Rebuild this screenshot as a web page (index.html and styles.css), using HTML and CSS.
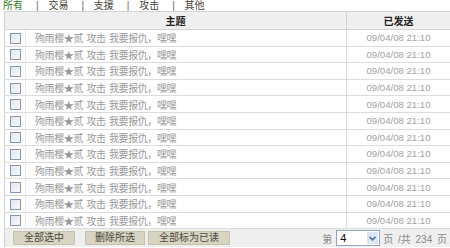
FILE: index.html
```html
<!DOCTYPE html>
<html lang="zh">
<head>
    <meta charset="UTF-8">
    <title>消息</title>
    <link rel="stylesheet" href="styles.css">
</head>
<body>
    <div class="tabs">
        <a class="tab active" href="#">所有</a><span class="sep">|</span>
        <a class="tab" href="#">交易</a><span class="sep">|</span>
        <a class="tab" href="#">支援</a><span class="sep">|</span>
        <a class="tab" href="#">攻击</a><span class="sep">|</span>
        <a class="tab" href="#">其他</a>
    </div>

    <table class="msg-table">
        <thead>
            <tr>
                <th colspan="2">主题</th>
                <th class="col-date">已发送</th>
            </tr>
        </thead>
        <tbody id="msg-body"></tbody>
    </table>

    <div class="footer-bar">
        <div class="actions">
            <button class="btn">全部选中</button>
            <button class="btn btn-delete">删除所选</button>
            <button class="btn btn-read">全部标为已读</button>
        </div>
        <div class="pager">
            <span>第</span>
            <div class="select">
                <span class="select-value">4</span>
                <span class="select-arrow">
                    <svg width="7" height="5" viewBox="0 0 7 5"><path d="M0.5 0.8 L3.5 3.8 L6.5 0.8" fill="none" stroke="#4d6fa8" stroke-width="1.6"/></svg>
                </span>
            </div>
            <span class="pager-total">页 /共 234 页</span>
        </div>
    </div>

    <script>
        // 生成消息列表
        const body = document.getElementById('msg-body');
        for (let i = 0; i < 12; i++) {
            const tr = document.createElement('tr');
            tr.innerHTML = `
                <td class="col-check"><span class="checkbox"></span></td>
                <td class="col-subject">殉雨樱★贰 攻击 我要报仇，嘿嘿</td>
                <td class="col-date">09/04/08 21:10</td>`;
            body.appendChild(tr);
        }
    </script>
</body>
</html>
```

FILE: styles.css
```css
body {
    margin: 0;
    padding: 0 0 0 4px;
    font-family: "Liberation Sans", "Noto Sans CJK SC", sans-serif;
    font-size: 10px;
    color: #333;
    background: #fff;
}
.tabs {
    height: 11px;
    line-height: 11px;
    margin-left: -1px;
    white-space: nowrap;
}
.tab {
    color: #4a4336;
    text-decoration: none;
}
.tab.active {
    color: #2f7a1c;
}
.sep {
    color: #666;
    margin: 0 7px 0 13px;
}
.msg-table {
    width: 446px;
    border-collapse: collapse;
    border-left: 1px solid #d0d0d0;
}
.msg-table th {
    height: 17px;
    background: #efefef;
    border-top: 1px solid #d4d4d4;
    border-bottom: 1px solid #d4d4d4;
    font-weight: bold;
    color: #222;
    padding: 0;
    text-align: center;
}
.msg-table th.col-date {
    border-left: 1px solid #d4d4d4;
}
.msg-table td {
    height: 15.6px;
    padding: 0;
    border-bottom: 1px solid #dcdcdc;
    color: #999;
}
.col-check {
    width: 20px;
    text-align: center;
    border-right: 1px solid #ececec;
}
.col-subject {
    padding-left: 9px !important;
    letter-spacing: -0.4px;
    word-spacing: 1px;
}
td.col-date {
    width: 103px;
    text-align: center;
    border-left: 1px solid #dcdcdc;
    color: #a2a2a2;
    font-size: 9.6px;
}
.checkbox {
    display: inline-block;
    width: 9px;
    height: 9px;
    border: 1px solid #8598b0;
    background: linear-gradient(135deg, #e4e6ea, #f8f8f8);
    vertical-align: middle;
}
.footer-bar {
    width: 445px;
    height: 18px;
    background: #efefef;
    display: flex;
    align-items: center;
    justify-content: space-between;
    border-left: 1px solid #d0d0d0;
}
.actions {
    display: flex;
    padding-left: 8px;
}
.btn {
    font-family: "Liberation Sans", "Noto Sans CJK SC", sans-serif;
    font-size: 10px;
    color: #4a4a40;
    background: #d8d4c2;
    border: 1px solid #c6c2ae;
    height: 14px;
    line-height: 12px;
    padding: 0 10px;
    margin: 0;
}
.btn-delete {
    margin-left: 10px;
    padding: 0 9px;
}
.btn-read {
    margin-left: 3px;
}
.pager {
    display: flex;
    align-items: center;
    gap: 3px;
    color: #8a8a8a;
    padding-right: 3px;
}
.select {
    display: flex;
    align-items: center;
    width: 42px;
    height: 14px;
    border: 1px solid #8fa6c6;
    background: #fff;
    margin: 0 0 0 1px;
}
.select-value {
    flex: 1;
    color: #000;
    padding-left: 3px;
    font-size: 11px;
}
.select-arrow {
    width: 11px;
    height: 12px;
    margin-right: 1px;
    background: #dbe6f6;
    display: flex;
    align-items: center;
    justify-content: center;
}
.pager-total {
    word-spacing: 2px;
}
```
